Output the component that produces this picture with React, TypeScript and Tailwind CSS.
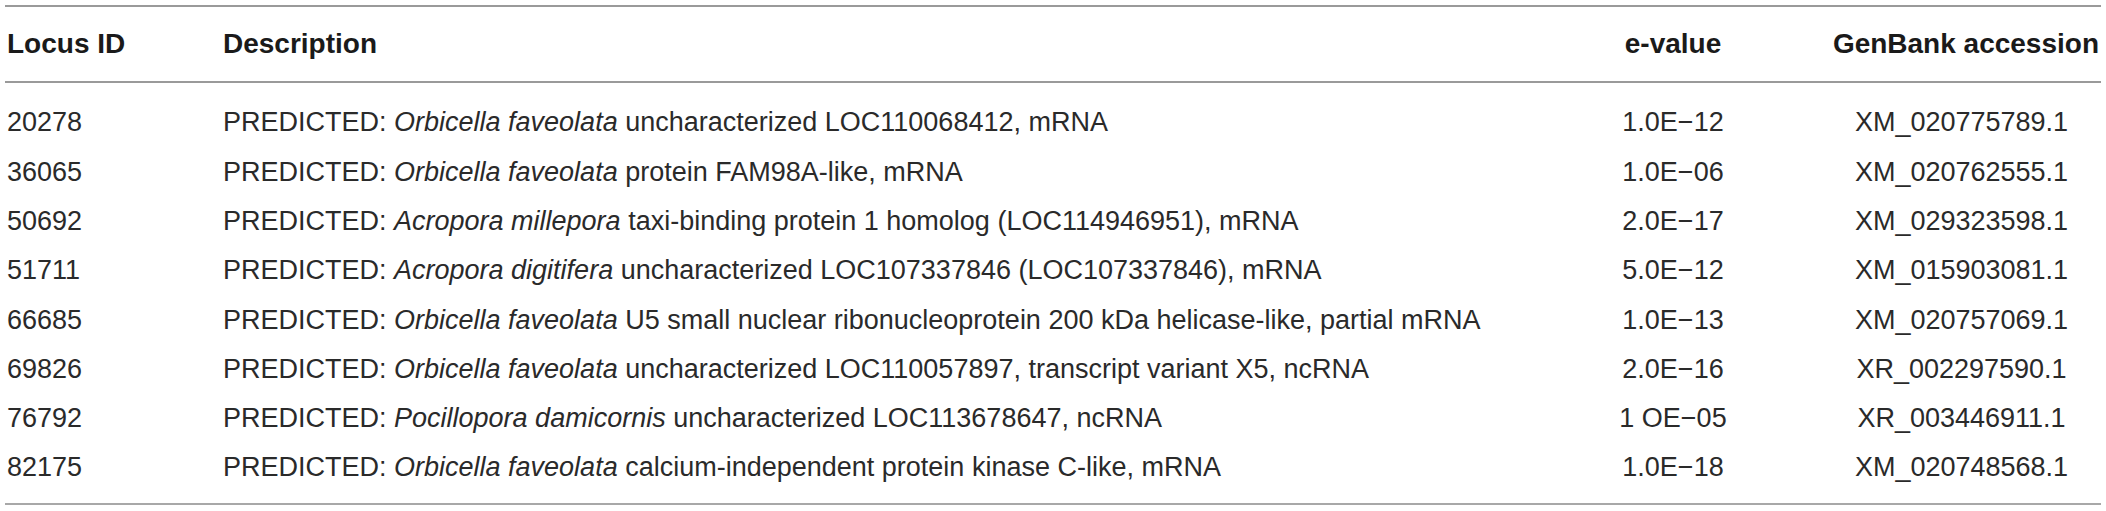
import React from "react";

type Row = {
  id: string;
  species: string;
  rest: string;
  evalue: string;
  accession: string;
};

const rows: Row[] = [
  { id: "20278", species: "Orbicella faveolata", rest: "uncharacterized LOC110068412, mRNA", evalue: "1.0E\u221212", accession: "XM_020775789.1" },
  { id: "36065", species: "Orbicella faveolata", rest: "protein FAM98A-like, mRNA", evalue: "1.0E\u221206", accession: "XM_020762555.1" },
  { id: "50692", species: "Acropora millepora", rest: "taxi-binding protein 1 homolog (LOC114946951), mRNA", evalue: "2.0E\u221217", accession: "XM_029323598.1" },
  { id: "51711", species: "Acropora digitifera", rest: "uncharacterized LOC107337846 (LOC107337846), mRNA", evalue: "5.0E\u221212", accession: "XM_015903081.1" },
  { id: "66685", species: "Orbicella faveolata", rest: "U5 small nuclear ribonucleoprotein 200 kDa helicase-like, partial mRNA", evalue: "1.0E\u221213", accession: "XM_020757069.1" },
  { id: "69826", species: "Orbicella faveolata", rest: "uncharacterized LOC110057897, transcript variant X5, ncRNA", evalue: "2.0E\u221216", accession: "XR_002297590.1" },
  { id: "76792", species: "Pocillopora damicornis", rest: "uncharacterized LOC113678647, ncRNA", evalue: "1 OE\u221205", accession: "XR_003446911.1" },
  { id: "82175", species: "Orbicella faveolata", rest: "calcium-independent protein kinase C-like, mRNA", evalue: "1.0E\u221218", accession: "XM_020748568.1" },
];

const cols = "grid grid-cols-[218px_1301px_298px_279px]";

export default function App() {
  return (
    <div className="w-[2106px] h-[511px] bg-white pt-[5px] pl-[5px] text-[#2a2a2a] font-['Liberation_Sans',Arial,sans-serif]">
      <div className="w-[2096px]">
        <div className="h-[2px] bg-[#9a9a9a]" />

        {/* Header */}
        <div className={`${cols} h-[74px] items-center text-[28px] font-bold text-[#1a1a1a]`}>
          <div className="pl-[2px]">Locus ID</div>
          <div>Description</div>
          <div className="text-center">e-value</div>
          <div className="text-right pr-[2px]">GenBank accession</div>
        </div>

        <div className="h-[2px] bg-[#9a9a9a]" />

        {/* Body */}
        <div className="pt-[15px] pb-[11px] text-[27px]">
          {rows.map((r) => (
            <div key={r.id} className={`${cols} h-[49.3px] items-center whitespace-nowrap`}>
              <div className="pl-[2px]">{r.id}</div>
              <div>
                PREDICTED: <i>{r.species}</i> {r.rest}
              </div>
              <div className="text-center">{r.evalue}</div>
              <div className="text-center">{r.accession}</div>
            </div>
          ))}
        </div>

        <div className="h-[2px] bg-[#a8a8a8]" />
      </div>
    </div>
  );
}
